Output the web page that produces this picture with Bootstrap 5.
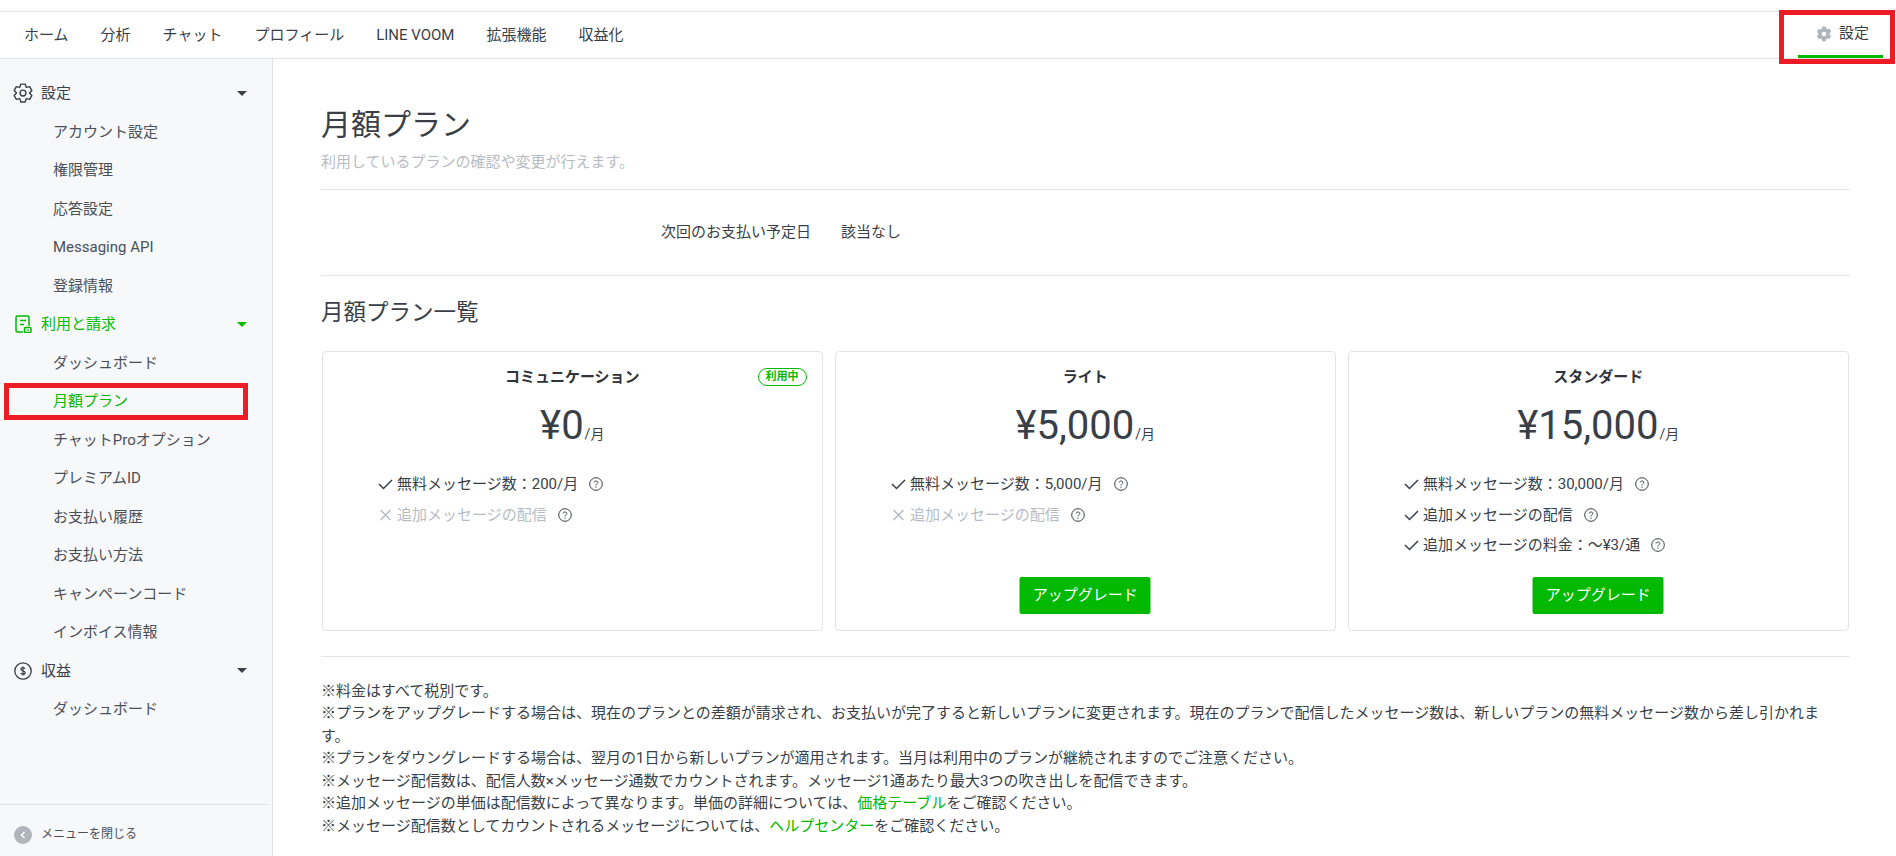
<!DOCTYPE html>
<html lang="ja">
<head>
  <meta charset="UTF-8" />
  <meta name="viewport" content="width=device-width, initial-scale=1.0"/>
  <title>月額プラン</title>
  <link href="https://cdn.jsdelivr.net/npm/bootstrap@5.3.2/dist/css/bootstrap.min.css" rel="stylesheet">
  <style>
    html, body { height: 100%; }
    body { font-family: Roboto, "Noto Sans CJK JP", sans-serif; font-size: 15px; line-height: 22.5px; color: #3a3f47; overflow: hidden; }
    .top-strip { height: 12px; border-bottom: 1px solid #e6e7ea; }
    .top-nav { height: 47px; border-bottom: 1px solid #e0e2e6; padding-left: 8px; padding-right: 13px; }
    .top-link { color: #3a3f47; text-decoration: none; padding: 0 16px; display: flex; align-items: center; height: 46px; }
    .top-setting { position: relative; height: 46px; width: 85px; padding-left: 18px; gap: 7px; display: flex; align-items: center; color: #3a3f47; text-decoration: none; border-bottom: 3px solid #00b900; }
    .mark-red { position: absolute; border: 5px solid #ed1c24; pointer-events: none; }
    .mark-nav { left: -19px; right: -12px; top: -2px; bottom: -9px; }
    .mark-side { left: 4px; top: 1px; width: 244px; height: 37px; }
    .page-body { height: 797px; }
    .side-menu { width: 273px; flex: none; background: #f7f8fa; border-right: 1px solid #e0e2e6; padding-top: 15px; }
    .side-head { height: 38.5px; padding-left: 14px; padding-right: 25px; display: flex; align-items: center; color: #3a3f47; text-decoration: none; }
    .side-head svg { margin-right: 9px; flex: none; }
    .side-head svg.cog-big { margin-left: -1px; margin-right: 8px; }
    .side-head.on { color: #00b900; }
    .caret-down { margin-left: auto; width: 0; height: 0; border-left: 5px solid transparent; border-right: 5px solid transparent; border-top: 5px solid currentColor; }
    .side-sub { height: 38.5px; padding-left: 53px; display: flex; align-items: center; color: #4b5058; text-decoration: none; position: relative; }
    .side-sub.on { color: #00b900; }
    .side-foot { margin-right: 4px; height: 52px; border-top: 1px solid #e0e2e6; padding-left: 14px; padding-top: 8px; font-size: 12px; color: #4b5058; gap: 9px; }
    .foot-dot { width: 18px; height: 18px; border-radius: 50%; background: #b0b5bc; }
    .main-area { padding: 48px 46px 0 48px; min-width: 0; }
    .page-title { font-size: 30px; line-height: 36px; font-weight: 400; margin-bottom: 8px; }
    .page-desc { color: #b7bcc4; margin-bottom: 15px; }
    .line-soft { height: 1px; background: #e5e6e9; }
    .pay-row { height: 85px; padding-left: 340px; gap: 30px; }
    .sec-title { font-size: 22.5px; line-height: 27px; font-weight: 400; margin: 23px 0 25px; }
    .plan-row { gap: 12.5px; margin-left: 1px; margin-bottom: 25px; }
    .plan-box { width: 500.5px; height: 280px; border: 1px solid #e2e4e8; border-radius: 4px; position: relative; }
    .plan-name { font-weight: 700; text-align: center; margin-top: 14px; line-height: 22px; color: #2f343b; }
    .plan-tag { position: absolute; top: 16px; right: 15px; width: 49px; height: 18px; border: 1px solid #00b900; border-radius: 9px; color: #00b900; font-size: 11px; font-weight: 700; line-height: 16px; text-align: center; }
    .plan-price { text-align: center; font-size: 40px; line-height: 48px; margin-top: 14px; margin-bottom: 11.5px; }
    .plan-price small { font-size: 14px; margin-left: 1px; }
    .plan-feats { list-style: none; padding: 0 0 0 55px; margin: 0; }
    .plan-feats li { height: 30.5px; display: flex; align-items: center; }
    .plan-feats li.off { color: #b7bcc4; }
    .plan-feats .tick { margin-right: 4px; flex: none; }
    .plan-feats .help { margin-left: 11px; flex: none; color: #3a3f47; }
    .btn-line { position: absolute; left: 50%; transform: translateX(-50%); bottom: 16px; width: 131px; height: 37px; padding: 0; background: #00b900; border: 0; border-radius: 2px; color: #fff; font-size: 15px; }
    .note-list { margin-top: 23px; max-width: 1505px; }
    .note-list a { color: #00b900; text-decoration: none; }
  </style>
</head>
<body>
  <div class="top-strip"></div>
  <nav class="top-nav d-flex align-items-start justify-content-between">
    <div class="d-flex">
      <a class="top-link" href="#">ホーム</a>
      <a class="top-link" href="#">分析</a>
      <a class="top-link" href="#">チャット</a>
      <a class="top-link" href="#">プロフィール</a>
      <a class="top-link" href="#">LINE VOOM</a>
      <a class="top-link" href="#">拡張機能</a>
      <a class="top-link" href="#">収益化</a>
    </div>
    <a class="top-setting" href="#">
      <svg width="16" height="16" viewBox="0 0 24 24"><path fill="#b0b5bc" fill-rule="evenodd" d="M9.400 .8h5.200l1.300 3.900 4.100-.8 2.600 4.500L19.800 12l2.800 3.100-2.600 4.500-4.100-.8-1.300 3.900H9.400l-1.300-3.900-4.100.8-2.600-4.500L4.200 12 1.400 8.900 4 4.400l4.100.8zM12 8.500a3.500 3.500 0 1 0 0 7 3.500 3.500 0 0 0 0-7z"/></svg>
      <span>設定</span>
      <span class="mark-red mark-nav"></span>
    </a>
  </nav>

  <div class="page-body d-flex">
    <aside class="side-menu d-flex flex-column">
      <a class="side-head" href="#">
        <svg class="cog-big" width="20" height="20" viewBox="0 0 24 24" fill="none" stroke="currentColor" stroke-width="1.700" stroke-linejoin="round"><circle cx="12" cy="12" r="3.500"/><path d="M9.400 1.300h5.200l1.300 3.950 4.070-.85 2.600 4.500L19.800 12l2.770 3.100-2.600 4.500-4.070-.85-1.300 3.950H9.400l-1.300-3.950-4.070.85-2.600-4.500L4.200 12 1.430 8.900l2.600-4.500 4.070.85z"/></svg>
        <span>設定</span><span class="caret-down"></span>
      </a>
      <a class="side-sub" href="#">アカウント設定</a>
      <a class="side-sub" href="#">権限管理</a>
      <a class="side-sub" href="#">応答設定</a>
      <a class="side-sub" href="#">Messaging API</a>
      <a class="side-sub" href="#">登録情報</a>
      <a class="side-head on" href="#">
        <svg width="18" height="18" viewBox="0 0 18 18" fill="none" stroke="currentColor" stroke-width="1.500"><path d="M9 17H3.500A1.500 1.500 0 0 1 2 15.500v-13A1.500 1.500 0 0 1 3.500 1h10A1.500 1.500 0 0 1 15 2.500V11"/><path d="M6 5.500h6M6 9.500h4"/><rect x="10.500" y="12.500" width="6.500" height="5" rx="1.200"/><path d="M12.500 15h2.500" stroke-width="1"/></svg>
        <span>利用と請求</span><span class="caret-down"></span>
      </a>
      <a class="side-sub" href="#">ダッシュボード</a>
      <a class="side-sub on" href="#">月額プラン<span class="mark-red mark-side"></span></a>
      <a class="side-sub" href="#">チャットProオプション</a>
      <a class="side-sub" href="#">プレミアムID</a>
      <a class="side-sub" href="#">お支払い履歴</a>
      <a class="side-sub" href="#">お支払い方法</a>
      <a class="side-sub" href="#">キャンペーンコード</a>
      <a class="side-sub" href="#">インボイス情報</a>
      <a class="side-head" href="#">
        <svg width="18" height="18" viewBox="0 0 18 18" fill="none" stroke="currentColor" stroke-width="1.300"><circle cx="9" cy="9" r="8.200"/><path d="M11 6.800C10.700 6 10 5.600 9 5.600c-1.200 0-2 .6-2 1.600 0 2.200 4.100 1.200 4.100 3.500 0 1-.9 1.700-2.100 1.700-1.100 0-1.900-.5-2.200-1.400M9 4.500v9" stroke-width="1.200"/></svg>
        <span>収益</span><span class="caret-down"></span>
      </a>
      <a class="side-sub" href="#">ダッシュボード</a>
      <div class="side-foot mt-auto d-flex align-items-center">
        <span class="foot-dot d-flex align-items-center justify-content-center">
          <svg width="6" height="8" viewBox="0 0 6 8" fill="none" stroke="#fff" stroke-width="1.500"><path d="M4.500 1 1.500 4l3 3"/></svg>
        </span>
        <span>メニューを閉じる</span>
      </div>
    </aside>

    <main class="main-area flex-grow-1">
      <h1 class="page-title">月額プラン</h1>
      <p class="page-desc">利用しているプランの確認や変更が行えます。</p>
      <div class="line-soft"></div>
      <div class="pay-row d-flex align-items-center">
        <span>次回のお支払い予定日</span>
        <span>該当なし</span>
      </div>
      <div class="line-soft"></div>
      <h2 class="sec-title">月額プラン一覧</h2>

      <div class="plan-row d-flex">
        <div class="plan-box">
          <div class="plan-name">コミュニケーション</div>
          <span class="plan-tag">利用中</span>
          <div class="plan-price">¥0<small>/月</small></div>
          <ul class="plan-feats">
            <li><svg class="tick" width="15" height="12" viewBox="0 0 15 12" fill="none" stroke="currentColor" stroke-width="1.500"><path d="M1 6l4.500 4.500L14 2"/></svg>無料メッセージ数：200/月<svg class="help" width="14" height="14" viewBox="0 0 14 14" fill="none" stroke="currentColor"><circle cx="7" cy="7" r="6.300"/><path d="M5.200 5.500C5.300 4.500 6 4 7 4s1.800.6 1.800 1.500C8.800 6.800 7 6.700 7 8.400"/><path d="M7 9.600v1.200"/></svg></li>
            <li class="off"><svg class="tick" width="15" height="12" viewBox="0 0 15 12" fill="none" stroke="currentColor" stroke-width="1.600"><path d="M2.500 1l10 10M12.500 1l-10 10"/></svg>追加メッセージの配信<svg class="help" width="14" height="14" viewBox="0 0 14 14" fill="none" stroke="currentColor"><circle cx="7" cy="7" r="6.300"/><path d="M5.200 5.500C5.300 4.500 6 4 7 4s1.800.6 1.800 1.500C8.800 6.800 7 6.700 7 8.400"/><path d="M7 9.600v1.200"/></svg></li>
          </ul>
        </div>
        <div class="plan-box">
          <div class="plan-name">ライト</div>
          <div class="plan-price">¥5,000<small>/月</small></div>
          <ul class="plan-feats">
            <li><svg class="tick" width="15" height="12" viewBox="0 0 15 12" fill="none" stroke="currentColor" stroke-width="1.500"><path d="M1 6l4.500 4.500L14 2"/></svg>無料メッセージ数：5,000/月<svg class="help" width="14" height="14" viewBox="0 0 14 14" fill="none" stroke="currentColor"><circle cx="7" cy="7" r="6.300"/><path d="M5.200 5.500C5.300 4.500 6 4 7 4s1.800.6 1.800 1.500C8.800 6.800 7 6.700 7 8.400"/><path d="M7 9.600v1.200"/></svg></li>
            <li class="off"><svg class="tick" width="15" height="12" viewBox="0 0 15 12" fill="none" stroke="currentColor" stroke-width="1.600"><path d="M2.500 1l10 10M12.500 1l-10 10"/></svg>追加メッセージの配信<svg class="help" width="14" height="14" viewBox="0 0 14 14" fill="none" stroke="currentColor"><circle cx="7" cy="7" r="6.300"/><path d="M5.200 5.500C5.300 4.500 6 4 7 4s1.800.6 1.800 1.500C8.800 6.800 7 6.700 7 8.400"/><path d="M7 9.600v1.200"/></svg></li>
          </ul>
          <button class="btn btn-line" type="button">アップグレード</button>
        </div>
        <div class="plan-box">
          <div class="plan-name">スタンダード</div>
          <div class="plan-price">¥15,000<small>/月</small></div>
          <ul class="plan-feats">
            <li><svg class="tick" width="15" height="12" viewBox="0 0 15 12" fill="none" stroke="currentColor" stroke-width="1.500"><path d="M1 6l4.500 4.500L14 2"/></svg>無料メッセージ数：30,000/月<svg class="help" width="14" height="14" viewBox="0 0 14 14" fill="none" stroke="currentColor"><circle cx="7" cy="7" r="6.300"/><path d="M5.200 5.500C5.300 4.500 6 4 7 4s1.800.6 1.800 1.500C8.800 6.800 7 6.700 7 8.400"/><path d="M7 9.600v1.200"/></svg></li>
            <li><svg class="tick" width="15" height="12" viewBox="0 0 15 12" fill="none" stroke="currentColor" stroke-width="1.500"><path d="M1 6l4.500 4.500L14 2"/></svg>追加メッセージの配信<svg class="help" width="14" height="14" viewBox="0 0 14 14" fill="none" stroke="currentColor"><circle cx="7" cy="7" r="6.300"/><path d="M5.200 5.500C5.300 4.500 6 4 7 4s1.800.6 1.800 1.500C8.800 6.800 7 6.700 7 8.400"/><path d="M7 9.600v1.200"/></svg></li>
            <li><svg class="tick" width="15" height="12" viewBox="0 0 15 12" fill="none" stroke="currentColor" stroke-width="1.500"><path d="M1 6l4.500 4.500L14 2"/></svg>追加メッセージの料金：～¥3/通<svg class="help" width="14" height="14" viewBox="0 0 14 14" fill="none" stroke="currentColor"><circle cx="7" cy="7" r="6.300"/><path d="M5.200 5.500C5.300 4.500 6 4 7 4s1.800.6 1.800 1.500C8.800 6.800 7 6.700 7 8.400"/><path d="M7 9.600v1.200"/></svg></li>
          </ul>
          <button class="btn btn-line" type="button">アップグレード</button>
        </div>
      </div>

      <div class="line-soft"></div>
      <div class="note-list">
        ※料金はすべて税別です。<br>
        ※プランをアップグレードする場合は、現在のプランとの差額が請求され、お支払いが完了すると新しいプランに変更されます。現在のプランで配信したメッセージ数は、新しいプランの無料メッセージ数から差し引かれます。<br>
        ※プランをダウングレードする場合は、翌月の1日から新しいプランが適用されます。当月は利用中のプランが継続されますのでご注意ください。<br>
        ※メッセージ配信数は、配信人数×メッセージ通数でカウントされます。メッセージ1通あたり最大3つの吹き出しを配信できます。<br>
        ※追加メッセージの単価は配信数によって異なります。単価の詳細については、<a href="#">価格テーブル</a>をご確認ください。<br>
        ※メッセージ配信数としてカウントされるメッセージについては、<a href="#">ヘルプセンター</a>をご確認ください。
      </div>
    </main>
  </div>

  <script src="https://cdn.jsdelivr.net/npm/bootstrap@5.3.2/dist/js/bootstrap.bundle.min.js"></script>
</body>
</html>
